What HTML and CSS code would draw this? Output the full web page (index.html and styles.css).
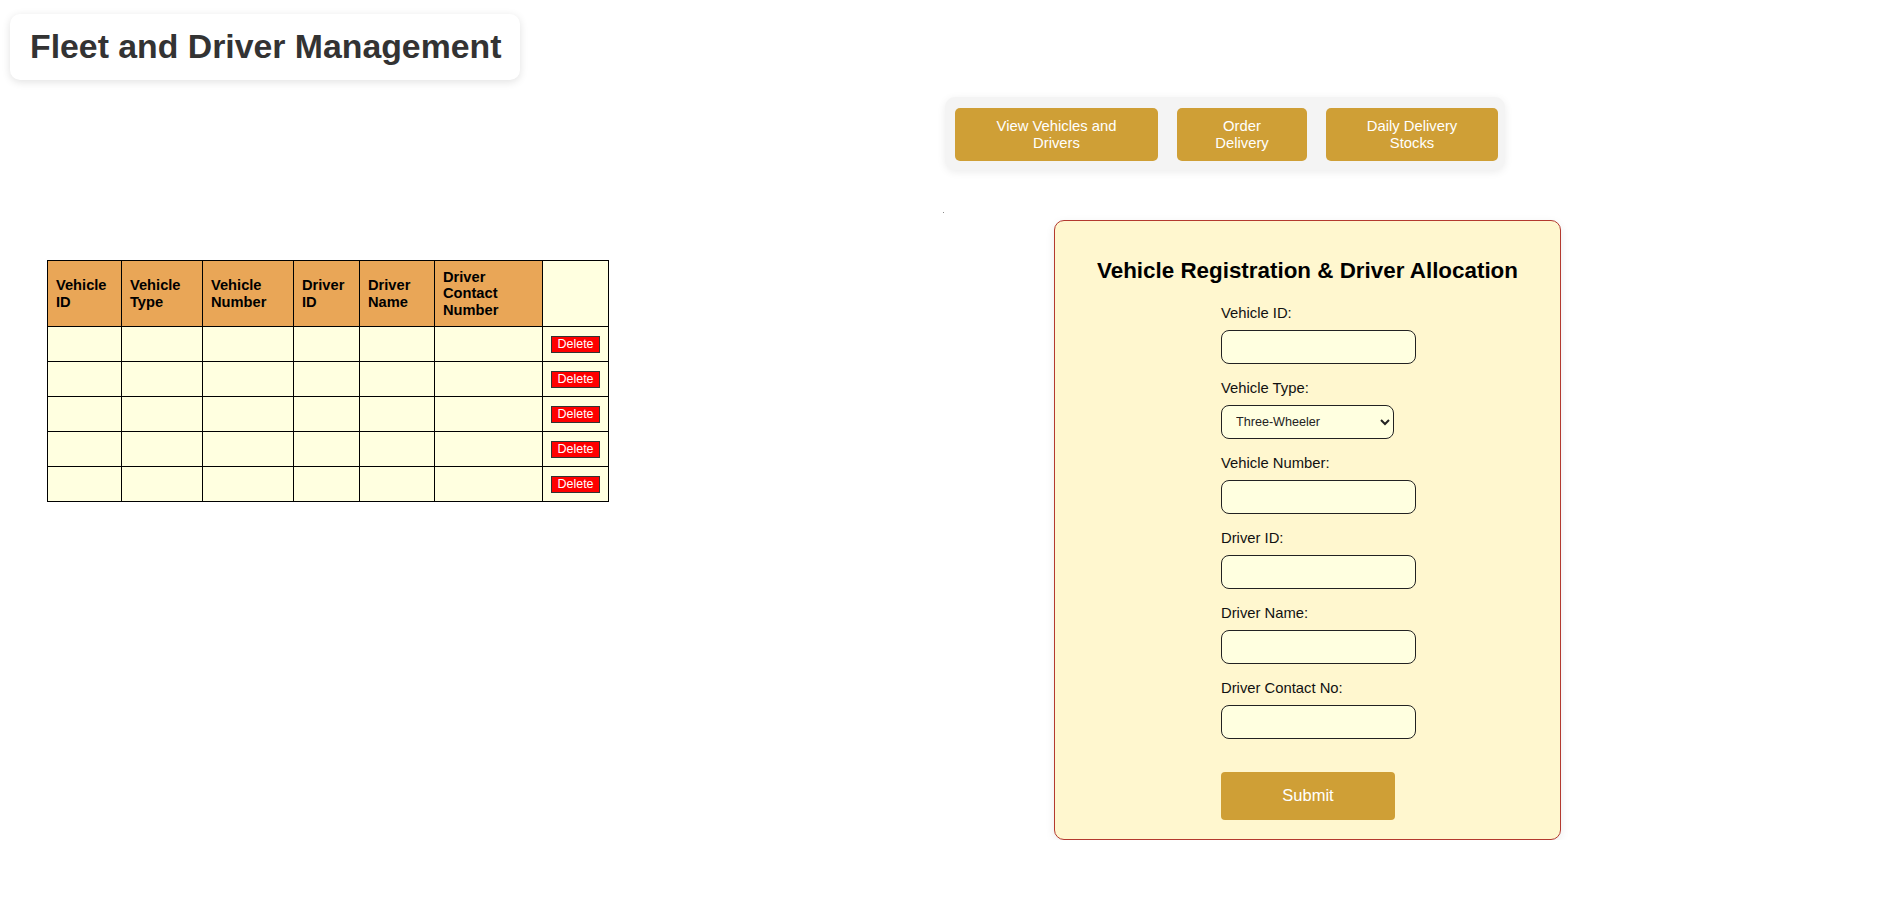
FILE: index.html
```html
<!DOCTYPE html>
<html lang="en">
<head>
<meta charset="utf-8">
<title>Fleet and Driver Management</title>
<link rel="stylesheet" href="styles.css">
</head>
<body>
<header class="title-card">
  <h1>Fleet and Driver Management</h1>
</header>
<div class="layout">
  <section class="left-col">
    <table class="fleet-table">
      <thead>
        <tr>
          <th class="col-a">Vehicle ID</th>
          <th class="col-b">Vehicle Type</th>
          <th class="col-c">Vehicle Number</th>
          <th class="col-d">Driver ID</th>
          <th class="col-e">Driver Name</th>
          <th class="col-f">Driver Contact Number</th>
          <th class="col-g th-blank"></th>
        </tr>
      </thead>
      <tbody>
        <tr><td></td><td></td><td></td><td></td><td></td><td></td><td><button class="del-btn">Delete</button></td></tr>
        <tr><td></td><td></td><td></td><td></td><td></td><td></td><td><button class="del-btn">Delete</button></td></tr>
        <tr><td></td><td></td><td></td><td></td><td></td><td></td><td><button class="del-btn">Delete</button></td></tr>
        <tr><td></td><td></td><td></td><td></td><td></td><td></td><td><button class="del-btn">Delete</button></td></tr>
        <tr><td></td><td></td><td></td><td></td><td></td><td></td><td><button class="del-btn">Delete</button></td></tr>
      </tbody>
    </table>
  </section>
  <section class="right-col">
    <nav class="nav-bar">
      <button class="nav-btn nav-btn-a">View Vehicles and Drivers</button>
      <button class="nav-btn nav-btn-b">Order Delivery</button>
      <button class="nav-btn nav-btn-c">Daily Delivery Stocks</button>
    </nav>
    <div class="dot"></div>
    <form class="reg-form">
      <h3 class="form-title">Vehicle Registration &amp; Driver Allocation</h3>
      <div class="fields">
        <label class="field-label" for="vid">Vehicle ID:</label>
        <input class="field-input" id="vid" type="text">
        <label class="field-label" for="vtype">Vehicle Type:</label>
        <select class="field-select" id="vtype">
          <option>Three-Wheeler</option>
          <option>Car</option>
          <option>Van</option>
          <option>Lorry</option>
        </select>
        <label class="field-label" for="vnum">Vehicle Number:</label>
        <input class="field-input" id="vnum" type="text">
        <label class="field-label" for="did">Driver ID:</label>
        <input class="field-input" id="did" type="text">
        <label class="field-label" for="dname">Driver Name:</label>
        <input class="field-input" id="dname" type="text">
        <label class="field-label" for="dcontact">Driver Contact No:</label>
        <input class="field-input" id="dcontact" type="text">
        <button class="submit-btn" type="button">Submit</button>
      </div>
    </form>
  </section>
</div>
</body>
</html>
```

FILE: styles.css
```css
* {
  box-sizing: border-box;
}

body {
  margin: 0;
  background: #ffffff;
  font-family: "Liberation Sans", Arial, sans-serif;
  color: #000;
}

.title-card {
  display: inline-block;
  margin: 14px 0 0 10px;
  padding: 13px 19px 14px 20px;
  background: #fff;
  border-radius: 10px;
  box-shadow: 0 2px 8px rgba(0, 0, 0, 0.12);
}

.title-card h1 {
  margin: 0;
  font-size: 33.8px;
  line-height: 39px;
  font-weight: bold;
  color: #333;
}

.layout {
  display: grid;
  grid-template-columns: 943px 1fr;
  align-items: start;
}

.left-col {
  padding: 180px 0 0 47px;
}

.fleet-table {
  border-collapse: collapse;
  border: 1px solid #000;
  font-size: 14.66px;
}

.fleet-table th {
  background: #e9a657;
  border: 1px solid #000;
  padding: 7.5px 8px;
  text-align: left;
  vertical-align: middle;
  font-weight: bold;
  line-height: 16.7px;
}

.fleet-table th.th-blank {
  background: #ffffe0;
}

.col-a { width: 74px; }
.col-b { width: 81px; }
.col-c { width: 91px; }
.col-d { width: 66px; }
.col-e { width: 75px; }
.col-f { width: 108px; }
.col-g { width: 66px; }

.fleet-table td {
  background: #ffffe0;
  border: 1px solid #000;
  padding: 8px;
  height: 35px;
  vertical-align: middle;
}

.del-btn {
  display: block;
  width: 49px;
  height: 17px;
  padding: 0 4px;
  background: #ff0000;
  color: #fff;
  border: 1px solid #333;
  font-family: "Liberation Sans", Arial, sans-serif;
  font-size: 12.5px;
  line-height: 15px;
  text-align: center;
}

.right-col {
  padding-top: 17px;
}

.nav-bar {
  display: flex;
  gap: 19px;
  width: fit-content;
  margin-left: 2px;
  padding: 11px 7px 9px 10px;
  background: #f4f4f4;
  border-radius: 10px;
  box-shadow: 0 2px 8px rgba(0, 0, 0, 0.08);
}

.nav-btn {
  height: 53px;
  padding: 0 10px;
  background: #cf9f36;
  color: #fff;
  border: none;
  border-radius: 5px;
  font-family: "Liberation Sans", Arial, sans-serif;
  font-size: 14.8px;
  line-height: 17px;
  text-align: center;
}

.nav-btn-a { width: 203px; padding: 0 40px; }
.nav-btn-b { width: 130px; padding: 0 38px; }
.nav-btn-c { width: 172px; padding: 0 40px; }

.dot {
  width: 1px;
  height: 1px;
  margin-top: 42px;
  background: #8a8a8a;
}

.reg-form {
  width: 507px;
  margin: 7px 0 0 111px;
  padding: 37px 0 19px 0;
  background: #fff7cf;
  border: 1px solid #b3392f;
  border-radius: 10px;
  box-shadow: 0 3px 10px rgba(0, 0, 0, 0.08);
}

.form-title {
  margin: 0;
  text-align: center;
  font-size: 22.4px;
  line-height: 25.8px;
  font-weight: bold;
  color: #000;
}

.fields {
  display: flex;
  flex-direction: column;
  align-items: flex-start;
  margin: 21px 0 0 166px;
}

.field-label {
  display: block;
  font-size: 14.8px;
  line-height: 17px;
  margin-bottom: 8.5px;
  color: #111;
}

.field-input {
  display: block;
  width: 195px;
  height: 34px;
  margin: 0 0 15.5px 0;
  padding: 0 10px;
  border: 1px solid #222;
  border-radius: 8px;
  background: #ffffe0;
  font-family: "Liberation Sans", Arial, sans-serif;
  font-size: 13px;
}

.field-select {
  display: block;
  width: 173px;
  height: 34px;
  margin: 0 0 15.5px 0;
  padding: 0 6px 0 10px;
  border: 1px solid #222;
  border-radius: 8px;
  background: #ffffe0;
  color: #222;
  font-family: "Liberation Sans", Arial, sans-serif;
  font-size: 12.6px;
}

.submit-btn {
  display: block;
  width: 174px;
  height: 48px;
  margin-top: 17px;
  background: #cf9f36;
  color: #fff;
  border: none;
  border-radius: 4px;
  font-family: "Liberation Sans", Arial, sans-serif;
  font-size: 16.5px;
}
```
